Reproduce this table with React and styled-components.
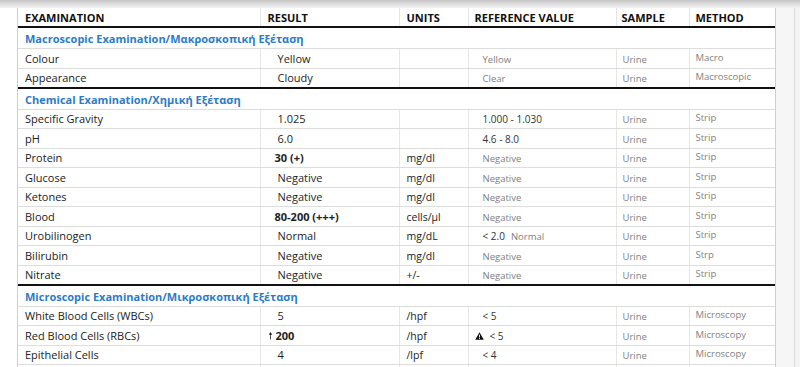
import React, { Fragment } from "react";
import styled, { createGlobalStyle } from "styled-components";

const GlobalStyle = createGlobalStyle`
  html, body {
    margin: 0;
    padding: 0;
    overflow: hidden;
    background: #ffffff;
    font-family: "Open Sans", "Noto Sans", sans-serif;
  }
`;

const sections = [
  {
    title: "Macroscopic Examination/Μακροσκοπική Εξέταση",
    rows: [
      { name: "Colour", result: "Yellow", units: "", ref: [{ t: "Yellow" }], method: "Macro" },
      { name: "Appearance", result: "Cloudy", units: "", ref: [{ t: "Clear" }], method: "Macroscopic" },
    ],
  },
  {
    title: "Chemical Examination/Χημική Εξέταση",
    rows: [
      { name: "Specific Gravity", result: "1.025", units: "", ref: [{ t: "1.000 - 1.030", dark: true }], method: "Strip" },
      { name: "pH", result: "6.0", units: "", ref: [{ t: "4.6 - 8.0", dark: true }], method: "Strip" },
      { name: "Protein", result: "30 (+)", bold: true, units: "mg/dl", ref: [{ t: "Negative" }], method: "Strip" },
      { name: "Glucose", result: "Negative", units: "mg/dl", ref: [{ t: "Negative" }], method: "Strip" },
      { name: "Ketones", result: "Negative", units: "mg/dl", ref: [{ t: "Negative" }], method: "Strip" },
      { name: "Blood", result: "80-200 (+++)", bold: true, units: "cells/µl", ref: [{ t: "Negative" }], method: "Strip" },
      { name: "Urobilinogen", result: "Normal", units: "mg/dL", ref: [{ t: "< 2.0", dark: true }, { t: "Normal" }], method: "Strip" },
      { name: "Bilirubin", result: "Negative", units: "mg/dl", ref: [{ t: "Negative" }], method: "Strp" },
      { name: "Nitrate", result: "Negative", units: "+/-", ref: [{ t: "Negative" }], method: "Strip" },
    ],
  },
  {
    title: "Microscopic Examination/Μικροσκοπική Εξέταση",
    rows: [
      { name: "White Blood Cells (WBCs)", result: "5", units: "/hpf", ref: [{ t: "< 5", dark: true }], method: "Microscopy" },
      { name: "Red Blood Cells (RBCs)", result: "200", bold: true, high: true, units: "/hpf", ref: [{ t: "< 5", dark: true }], warn: true, method: "Microscopy" },
      { name: "Epithelial Cells", result: "4", units: "/lpf", ref: [{ t: "< 4", dark: true }], method: "Microscopy" },
      { name: "", result: "", units: "", ref: [], method: "" },
    ],
  },
];

function UpArrow() {
  return (
    <svg width="5" height="9" viewBox="0 0 5 9">
      <path d="M2.5 1 L4.3 3.8 L2.9 3.8 L2.9 8.6 L2.1 8.6 L2.1 3.8 L0.7 3.8 Z" fill="#222" />
    </svg>
  );
}

function WarnIcon() {
  return (
    <svg width="9" height="8" viewBox="0 0 9 8">
      <path d="M4.5 0.3 L8.8 7.7 L0.2 7.7 Z" fill="#111" />
      <rect x="4.05" y="2.6" width="0.9" height="2.9" fill="#fff" />
      <rect x="4.05" y="6.1" width="0.9" height="0.9" fill="#fff" />
    </svg>
  );
}

function App() {
  return (
    <Fragment>
      <GlobalStyle />
      <TopShade />
      <Frame>
        <LeftGutter />
        <Sheet>
          <Table>
            <colgroup>
              <col style={{ width: 242 }} />
              <col style={{ width: 139 }} />
              <col style={{ width: 69 }} />
              <col style={{ width: 148 }} />
              <col style={{ width: 73 }} />
              <col />
            </colgroup>
            <thead>
              <tr>
                <Th>Examination</Th>
                <Th>Result</Th>
                <Th>Units</Th>
                <Th $pad={6}>Reference Value</Th>
                <Th $pad={5}>Sample</Th>
                <Th $pad={6}>Method</Th>
              </tr>
            </thead>
            <tbody>
              {sections.map((section) => (
                <Fragment key={section.title}>
                  <tr>
                    <SectionCell colSpan={6}>{section.title}</SectionCell>
                  </tr>
                  {section.rows.map((row, i) => {
                    const last = i === section.rows.length - 1 && section.title !== sections[2].title;
                    return (
                      <Row key={row.name + i}>
                        <Td $thick={last}>{row.name}</Td>
                        <Td $thick={last}>
                          <Result $bold={row.bold} $high={row.high}>
                            {row.high && <UpArrow />}
                            {row.result}
                          </Result>
                        </Td>
                        <Td $thick={last}>
                          <Units>{row.units}</Units>
                        </Td>
                        <Td $thick={last} $pad={6}>
                          <RefWrap $warn={row.warn}>
                            {row.warn && <WarnIcon />}
                            {row.ref.map((r) => (
                              <RefText key={r.t} $dark={r.dark}>
                                {r.t}
                              </RefText>
                            ))}
                          </RefWrap>
                        </Td>
                        <Td $thick={last} $pad={6}>
                          <Meta>{row.name ? "Urine" : ""}</Meta>
                        </Td>
                        <Td $thick={last} $pad={6} $last>
                          <Meta $raised>{row.method}</Meta>
                        </Td>
                      </Row>
                    );
                  })}
                </Fragment>
              ))}
            </tbody>
          </Table>
        </Sheet>
        <RightGutter />
      </Frame>
    </Fragment>
  );
}

export default App;

const TopShade = styled.div`
  height: 8px;
  background: linear-gradient(#c4c4c4, #dcdcdc 45%, #f2f2f2);
`;

const Frame = styled.div`
  display: flex;
  height: 359px;
`;

const LeftGutter = styled.div`
  width: 17px;
  flex: none;
`;

const Sheet = styled.div`
  width: 759px;
  flex: none;
  box-sizing: border-box;
  border-left: 1px solid #cfcfcf;
  border-right: 1px solid #cfcfcf;
  background: #ffffff;
`;

const RightGutter = styled.div`
  flex: 1;
  background: linear-gradient(to right, #f6f6f6 0 18px, #dcdcdc 18px 19px, #f3f3f3 19px);
`;

const Table = styled.table`
  width: 100%;
  table-layout: fixed;
  border-collapse: collapse;
`;

const Th = styled.th`
  height: 18px;
  padding: 0 0 0 ${(p) => p.$pad || 7}px;
  font-size: 11px;
  font-weight: 700;
  color: #111111;
  text-transform: uppercase;
  text-align: left;
  vertical-align: middle;
  border-bottom: 2px solid #111111;
  border-right: 1px solid #e4e4e4;
  white-space: nowrap;
  &:last-child {
    border-right: none;
  }
`;

const SectionCell = styled.td`
  height: 19px;
  padding: 1px 0 0 7px;
  font-size: 11px;
  font-weight: 700;
  color: #2b7cc6;
  vertical-align: middle;
  border-bottom: 1px solid #dddddd;
  white-space: nowrap;
`;

const Row = styled.tr`
  height: 19.5px;
`;

const Td = styled.td`
  padding: 0 0 0 ${(p) => p.$pad || 7}px;
  font-size: 11px;
  color: #222222;
  vertical-align: middle;
  white-space: nowrap;
  border-bottom: ${(p) => (p.$thick ? "2px solid #111111" : "1px solid #dddddd")};
  border-right: ${(p) => (p.$last ? "none" : "1px solid #e6e6e6")};
`;

const Result = styled.span`
  display: inline-flex;
  align-items: center;
  gap: 3px;
  margin-left: ${(p) => (p.$high ? 0 : p.$bold ? 7 : 10)}px;
  font-weight: ${(p) => (p.$bold ? 700 : 400)};
  color: #1e1e1e;
`;

const Units = styled.span`
  font-size: 10.5px;
  color: #222222;
`;

const RefWrap = styled.span`
  display: inline-flex;
  align-items: center;
  gap: 6px;
  margin-left: ${(p) => (p.$warn ? 0 : 8)}px;
`;

const RefText = styled.span`
  font-size: ${(p) => (p.$dark ? "10px" : "9.5px")};
  color: ${(p) => (p.$dark ? "#333333" : "#808080")};
`;

const Meta = styled.span`
  display: inline-block;
  font-size: 9.5px;
  color: #828282;
  position: relative;
  top: ${(p) => (p.$raised ? "-2px" : "0")};
`;
